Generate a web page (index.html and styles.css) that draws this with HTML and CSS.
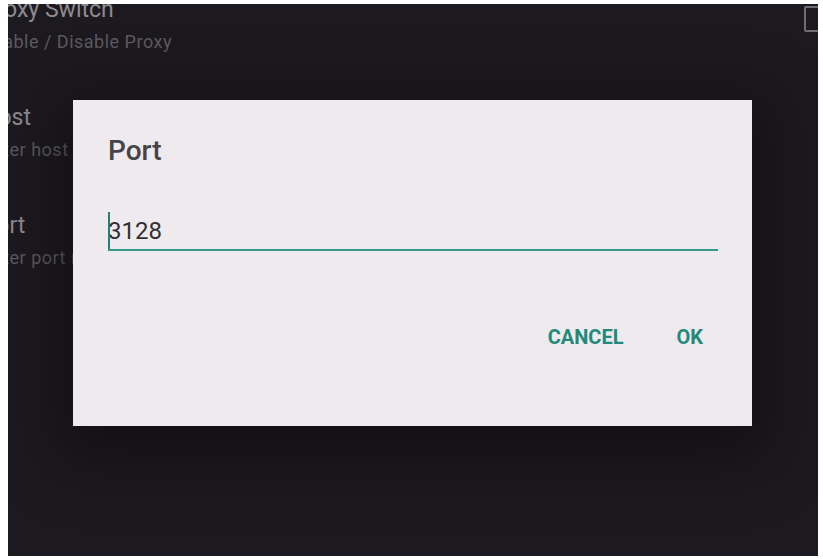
FILE: index.html
```html
<!DOCTYPE html>
<html>
<head>
<meta charset="utf-8">
<link rel="stylesheet" href="styles.css">
</head>
<body>
<div class="screen">
  <div class="list">
    <div class="pref">
      <div class="pref-text">
        <div class="pref-title">Proxy Switch</div>
        <div class="pref-sub">Enable / Disable Proxy</div>
      </div>
      <div class="checkbox"></div>
    </div>
    <div class="pref">
      <div class="pref-text">
        <div class="pref-title">Host</div>
        <div class="pref-sub">Enter host name</div>
      </div>
    </div>
    <div class="pref">
      <div class="pref-text">
        <div class="pref-title">Port</div>
        <div class="pref-sub">Enter port number</div>
      </div>
    </div>
  </div>
  <div class="dialog">
    <div class="dialog-title">Port</div>
    <div class="field"><span class="field-value">3128</span></div>
    <div class="actions">
      <span class="btn">CANCEL</span>
      <span class="btn">OK</span>
    </div>
  </div>
</div>
</body>
</html>
```
FILE: styles.css
```css
html, body {
  margin: 0;
  padding: 0;
  background: #ffffff;
}
body {
  font-family: Roboto, "Liberation Sans", Arial, sans-serif;
}
.screen {
  position: relative;
  margin: 4px 5px 0 8px;
  height: 552px;
  background: #1d1a1f;
  overflow: hidden;
}
.list {
  margin-left: -26px;
  margin-right: -12px;
  margin-top: -7px;
  display: flex;
  flex-direction: column;
  gap: 52px;
}
.pref {
  display: flex;
  justify-content: space-between;
  align-items: flex-start;
}
.pref-text {
  display: flex;
  flex-direction: column;
  gap: 8px;
}
.pref-title {
  font-size: 23px;
  line-height: 26px;
  color: #8e8b90;
}
.pref-sub {
  font-size: 18px;
  line-height: 22px;
  letter-spacing: 0.5px;
  color: #5c595f;
}
.checkbox {
  width: 22px;
  height: 22px;
  margin-top: 9px;
  border: 2px solid #706d72;
  border-radius: 2px;
}
.dialog {
  position: absolute;
  left: 65px;
  top: 96px;
  width: 679px;
  height: 326px;
  box-sizing: border-box;
  padding: 35px 49px 0 35px;
  background: #eeeaee;
  box-shadow: 0 16px 60px 18px rgba(0, 0, 0, 0.38);
  display: flex;
  flex-direction: column;
}
.dialog-title {
  font-size: 28px;
  line-height: 32px;
  font-weight: 500;
  color: #464448;
}
.field {
  position: relative;
  margin-top: 50px;
  margin-right: -15px;
  padding-bottom: 4px;
  border-bottom: 2px solid #33998b;
  font-size: 24px;
  line-height: 28px;
  color: #323033;
}
.field::before {
  content: "";
  position: absolute;
  left: 0;
  top: -5px;
  bottom: 0;
  width: 2px;
  background: #2b7d72;
}
.actions {
  margin-top: 74px;
  display: flex;
  justify-content: flex-end;
  gap: 53px;
}
.btn {
  font-size: 20px;
  line-height: 24px;
  font-weight: 700;
  color: #23897b;
}
```
